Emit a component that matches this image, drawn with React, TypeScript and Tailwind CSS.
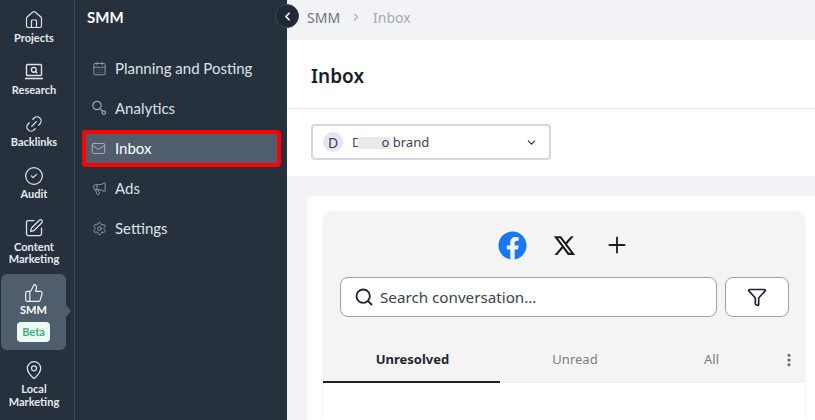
import {
  CalendarDays, ChevronDown, ChevronLeft, ChevronRight, CircleCheck, EllipsisVertical, Funnel, House, Link2,
  Mail, MapPin, Megaphone, Plus, Search, Settings, SquarePen, ThumbsUp,
} from "lucide-react";
import { FaFacebook } from "react-icons/fa";
import { RiTwitterXLine } from "react-icons/ri";

function ResearchIcon() {
  return (
    <svg width="20" height="20" viewBox="0 0 20 20" fill="none" stroke="currentColor" strokeWidth="1.4">
      <rect x="2.5" y="2.5" width="15" height="11" rx="1" />
      <circle cx="9.8" cy="7.8" r="2.4" />
      <path d="M11.6 9.6l1.6 1.6" />
      <path d="M1 16.5h18" strokeWidth="1.6" />
    </svg>
  );
}

function KeySearchIcon() {
  return (
    <svg width="16" height="16" viewBox="0 0 16 16" fill="none" stroke="currentColor" strokeWidth="1.2">
      <circle cx="6" cy="5.5" r="4.2" />
      <path d="M9 8.6l2.6 2.8" />
      <circle cx="12.8" cy="12.6" r="1.7" />
    </svg>
  );
}

const railItems = [
  { icon: <House size={20} strokeWidth={1.4} />, label: "Projects" },
  { icon: <ResearchIcon />, label: "Research" },
  { icon: <Link2 size={20} strokeWidth={1.5} className="-rotate-45" />, label: "Backlinks" },
  { icon: <CircleCheck size={20} strokeWidth={1.5} />, label: "Audit" },
];

const navItems = [
  { icon: <CalendarDays size={15} strokeWidth={1.4} />, text: "Planning and Posting" },
  { icon: <KeySearchIcon />, text: "Analytics" },
  { icon: <Mail size={15} strokeWidth={1.4} />, text: "Inbox", active: true },
  { icon: <Megaphone size={15} strokeWidth={1.4} />, text: "Ads" },
  { icon: <Settings size={15} strokeWidth={1.4} />, text: "Settings" },
];

export default function App() {
  return (
    <div className="w-[815px] h-[420px] overflow-hidden flex bg-[#f1f3f7] relative font-['Lato',sans-serif]">
      {/* Rail */}
      <aside className="w-[75px] shrink-0 h-full bg-[#27313e] border-r border-[#3d4855] pt-[10px] pr-[6px] flex flex-col">
        {railItems.map((item) => (
          <div key={item.label} className="h-[52px] flex flex-col items-center">
            <div className="h-5 flex items-center justify-center text-[#dfe4ea]">{item.icon}</div>
            <div className="mt-[2px] text-center text-[11px] leading-3 font-bold text-[#e6ebf0]">{item.label}</div>
          </div>
        ))}
        <div className="h-[56px] flex flex-col items-center">
          <SquarePen size={20} strokeWidth={1.5} className="text-[#dfe4ea]" />
          <div className="mt-[3px] text-center text-[11px] leading-3 font-bold text-[#e6ebf0]">
            <div>Content</div>
            <div>Marketing</div>
          </div>
        </div>
        <div className="relative ml-px w-[65px] h-[76px] rounded-md bg-[#4f5d6c] flex flex-col items-center pt-[9px]">
          <ThumbsUp size={20} strokeWidth={1.4} className="text-[#eef1f4]" />
          <div className="mt-px text-[11px] leading-3 font-bold text-white">SMM</div>
          <div className="mt-[6px] w-[33px] h-5 rounded bg-[#ebfaf2] text-[#3fae7f] text-[11px] font-bold flex items-center justify-center">
            Beta
          </div>
          <div className="absolute left-[65px] top-[31px] w-0 h-0 border-y-[6px] border-y-transparent border-l-[5px] border-l-[#4f5d6c]" />
        </div>
        <div className="flex flex-col items-center mt-[10px]">
          <MapPin size={20} strokeWidth={1.5} className="text-[#dfe4ea]" />
          <div className="mt-[2px] text-center text-[11px] leading-[13px] font-bold text-[#e6ebf0]">
            <div>Local</div>
            <div>Marketing</div>
          </div>
        </div>
      </aside>

      {/* Section nav */}
      <nav className="w-[212px] shrink-0 h-full bg-[#27313e] pl-[7px] pt-[7px]">
        <div className="pl-[5px] h-5 text-[15px] leading-5 font-bold text-white">SMM</div>
        <ul className="mt-[21px] flex flex-col">
          {navItems.map((item) => (
            <li key={item.text} className="h-[40px] flex">
              <div
                className={
                  item.active
                    ? "mt-[2px] mb-px w-[199px] flex items-center gap-[9px] pl-[4px] rounded-sm border-[4px] border-[#ff0000] bg-[#4f5d6c] text-white"
                    : "flex items-center gap-[8px] pl-[9px] text-[#dce3ea]"
                }
              >
                <span className={item.active ? "w-[16px] flex justify-center text-[#b4bdc6]" : "w-[16px] flex justify-center text-[#9aa5b1]"}>
                  {item.icon}
                </span>
                <span className="text-[15px]">{item.text}</span>
              </div>
            </li>
          ))}
        </ul>
      </nav>

      {/* Collapse toggle */}
      <button className="absolute left-[275px] top-[4px] w-6 h-6 rounded-full bg-[#1f2935] border border-[#3d4855] flex items-center justify-center text-white">
        <ChevronLeft size={13} strokeWidth={3} />
      </button>

      {/* Main */}
      <main className="flex-1 min-w-0 h-full flex flex-col font-['Noto_Sans',sans-serif]">
        <div className="h-10 shrink-0 pl-[20px] pb-[6px] flex items-center text-[14px]">
          <span className="text-[#6c7480]">SMM</span>
          <ChevronRight size={12} strokeWidth={2.2} className="ml-[10px] mr-[11px] text-[#a9aeb6]" />
          <span className="text-[#a4a9b1]">Inbox</span>
        </div>
        <div className="h-[69px] shrink-0 bg-white border-b border-[#e3e4ef] pl-6 pt-[4px] flex items-center">
          <h1 className="text-[19px] font-semibold text-[#181d27]">Inbox</h1>
        </div>
        <div className="h-[67px] shrink-0 bg-white pl-6 pt-[15px]">
          <div className="w-[240px] h-[36px] rounded border-2 border-[#d5d8e4] flex items-center pl-[10px] pr-[11px]">
            <span className="w-5 h-5 rounded-full bg-[#e3e6f0] text-[#3a4150] text-[14px] flex items-center justify-center">
              D
            </span>
            <span className="ml-[9px] flex items-center text-[13px] text-[#3a4150] pt-[2px]">
              D<span className="-ml-1 w-[33px] h-3 bg-[#e9e9e9]" />
              <span className="-ml-[9px]">o brand</span>
            </span>
            <ChevronDown size={13} strokeWidth={2} className="ml-auto text-[#252b37]" />
          </div>
        </div>
        <div className="flex-1 pt-5 pl-5">
          <div className="h-full bg-white rounded-tl-md pt-4 pl-4">
            <div className="w-[482px] h-full rounded-t-lg overflow-hidden bg-white shadow-[0_0_3px_rgba(0,0,0,0.08)]">
              <div className="h-[171px] bg-[#f4f4f4] flex flex-col">
                <div className="pt-[18px] pl-[175px] flex items-center h-[48px]">
                  <FaFacebook size={29} className="text-[#1877f2]" />
                  <RiTwitterXLine size={25} className="ml-[25px] text-[#1a1a1a]" />
                  <Plus size={26} strokeWidth={1.7} className="ml-[27px] text-[#1f1f1f]" />
                </div>
                <div className="mt-[17px] pl-[17px] flex gap-2">
                  <div className="w-[377px] h-10 bg-white rounded-lg border border-[#a0a0a0] flex items-center pl-[13px]">
                    <Search size={20} strokeWidth={2.2} className="text-[#1f2430]" />
                    <span className="ml-[6px] text-[15.2px] text-[#3c4150]">Search conversation...</span>
                  </div>
                  <div className="w-16 h-10 bg-white rounded-lg border border-[#a0a0a0] flex items-center justify-center">
                    <Funnel size={20} strokeWidth={2} className="text-[#1f2430]" />
                  </div>
                </div>
                <div className="mt-auto h-[48px] flex text-[13px]">
                  <div className="w-[177px] flex items-center justify-center font-bold text-[#23262f] border-b-2 border-[#1f222b] pl-[2px] pt-[3px]">
                    Unresolved
                  </div>
                  <div className="w-[150px] flex items-center justify-center text-[#7a7d87] pt-[2px]">Unread</div>
                  <div className="w-[131px] flex items-center justify-center text-[#7a7d87] pr-[8px] pt-[2px]">All</div>
                  <div className="flex items-center text-[#60646e] pt-[2px]">
                    <EllipsisVertical size={16} strokeWidth={2.6} />
                  </div>
                </div>
              </div>
            </div>
          </div>
        </div>
      </main>
    </div>
  );
}
